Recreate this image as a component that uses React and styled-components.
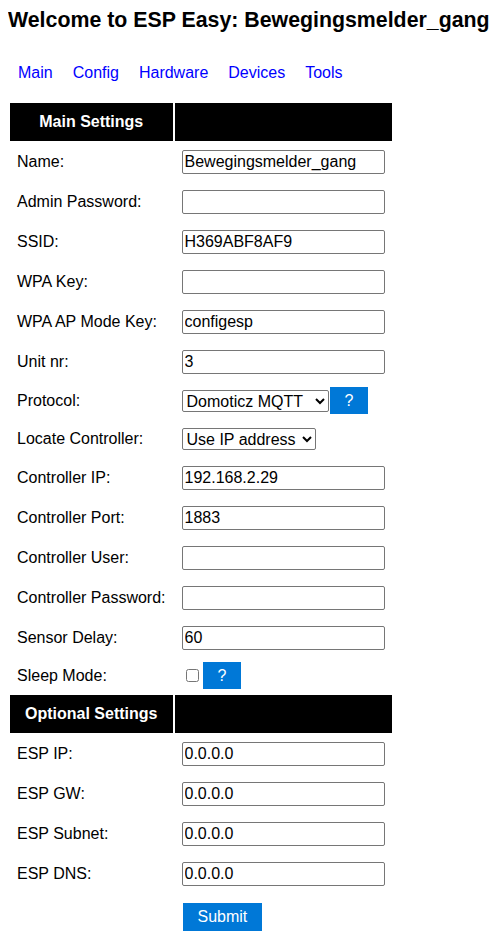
import React from 'react';
import styled, { createGlobalStyle } from 'styled-components';

const GlobalStyle = createGlobalStyle`
  body {
    margin: 8px;
    font-family: 'Liberation Sans', Arial, sans-serif;
    font-size: 16px;
    line-height: 18px;
    color: black;
    background: #ffffff;
  }
`;

const Title = styled.h1`
  margin: 0 0 32px 0;
  font-size: 21.33px;
  line-height: 24px;
  font-weight: bold;
  white-space: nowrap;
`;

const Menu = styled.nav`
  display: flex;
  gap: 20px;
  padding-left: 10px;
  margin-bottom: 19px;
  line-height: 18px;
`;

const MenuLink = styled.a`
  color: blue;
  text-decoration: none;
`;

const Table = styled.table`
  border-collapse: separate;
  border-spacing: 2px;
  margin-left: 0;
`;

const Head = styled.th`
  padding: 10px;
  height: 18px;
  line-height: 18px;
  background-color: black;
  color: #ffffff;
  font-weight: bold;
  text-align: center;
`;

const Cell = styled.td`
  padding: 7px;
  white-space: nowrap;
  line-height: ${(p) => (p.$line ? `${p.$line}px` : '18px')};
`;

const TextInput = styled.input`
  box-sizing: border-box;
  width: 203px;
  height: 24px;
  margin: 0;
  padding: 1px 2px;
  border: 1px solid #767676;
  border-radius: 2px;
  font-family: 'Liberation Sans', Arial, sans-serif;
  font-size: 16px;
  color: black;
  vertical-align: top;
`;

const Select = styled.select`
  box-sizing: border-box;
  width: ${(p) => p.$w}px;
  height: 22px;
  margin: 0;
  border: 1px solid #767676;
  border-radius: 2px;
  font-family: 'Liberation Sans', Arial, sans-serif;
  font-size: 16px;
  color: black;
  background: #ffffff;
  vertical-align: top;
`;

const HelpLink = styled.a`
  padding: 5px 15px;
  background-color: #0078d7;
  color: #ffffff;
  border: 1px solid #ffffff;
  text-decoration: none;
`;

const Check = styled.input`
  margin: 3px 3px 3px 4px;
  width: 13px;
  height: 13px;
  vertical-align: top;
`;

const SubmitButton = styled.button`
  padding: 5px 15px;
  background-color: #0078d7;
  color: #ffffff;
  border: 1px solid #ffffff;
  font-family: 'Liberation Sans', Arial, sans-serif;
  font-size: 16px;
  line-height: 18px;
  margin: 0;
  vertical-align: top;
  cursor: pointer;
`;

const mainRows = [
  ['Name:', 'Bewegingsmelder_gang'],
  ['Admin Password:', ''],
  ['SSID:', 'H369ABF8AF9'],
  ['WPA Key:', ''],
  ['WPA AP Mode Key:', 'configesp'],
  ['Unit nr:', '3'],
];

const controllerRows = [
  ['Controller IP:', '192.168.2.29'],
  ['Controller Port:', '1883'],
  ['Controller User:', ''],
  ['Controller Password:', ''],
  ['Sensor Delay:', '60'],
];

const optionalRows = [
  ['ESP IP:', '0.0.0.0'],
  ['ESP GW:', '0.0.0.0'],
  ['ESP Subnet:', '0.0.0.0'],
  ['ESP DNS:', '0.0.0.0'],
];

const InputRow = ({ label, value }) => (
  <tr>
    <Cell>{label}</Cell>
    <Cell $line={24}>
      <TextInput type="text" defaultValue={value} />
    </Cell>
  </tr>
);

const App = () => (
  <>
    <GlobalStyle />
    <Title>Welcome to ESP Easy: Bewegingsmelder_gang</Title>
    <Menu>
      <MenuLink href="#">Main</MenuLink>
      <MenuLink href="#">Config</MenuLink>
      <MenuLink href="#">Hardware</MenuLink>
      <MenuLink href="#">Devices</MenuLink>
      <MenuLink href="#">Tools</MenuLink>
    </Menu>
    <form onSubmit={(e) => e.preventDefault()}>
      <Table>
        <tbody>
          <tr>
            <Head>Main Settings</Head>
            <Head></Head>
          </tr>
          {mainRows.map(([label, value]) => (
            <InputRow key={label} label={label} value={value} />
          ))}
          <tr>
            <Cell>Protocol:</Cell>
            <Cell $line={21}>
              <Select $w={147} defaultValue="Domoticz MQTT">
                <option>Domoticz HTTP</option>
                <option>Domoticz MQTT</option>
                <option>Nodo Telnet</option>
              </Select>
              <HelpLink href="#">?</HelpLink>
            </Cell>
          </tr>
          <tr>
            <Cell>Locate Controller:</Cell>
            <Cell $line={21}>
              <Select $w={134} defaultValue="Use IP address">
                <option>Use IP address</option>
                <option>Use Hostname</option>
              </Select>
            </Cell>
          </tr>
          {controllerRows.map(([label, value]) => (
            <InputRow key={label} label={label} value={value} />
          ))}
          <tr>
            <Cell>Sleep Mode:</Cell>
            <Cell $line={20}>
              <Check type="checkbox" />
              <HelpLink href="#">?</HelpLink>
            </Cell>
          </tr>
          <tr>
            <Head>Optional Settings</Head>
            <Head></Head>
          </tr>
          {optionalRows.map(([label, value]) => (
            <InputRow key={label} label={label} value={value} />
          ))}
          <tr>
            <Cell></Cell>
            <Cell $line={30}>
              <SubmitButton type="submit">Submit</SubmitButton>
            </Cell>
          </tr>
        </tbody>
      </Table>
    </form>
  </>
);

export default App;
